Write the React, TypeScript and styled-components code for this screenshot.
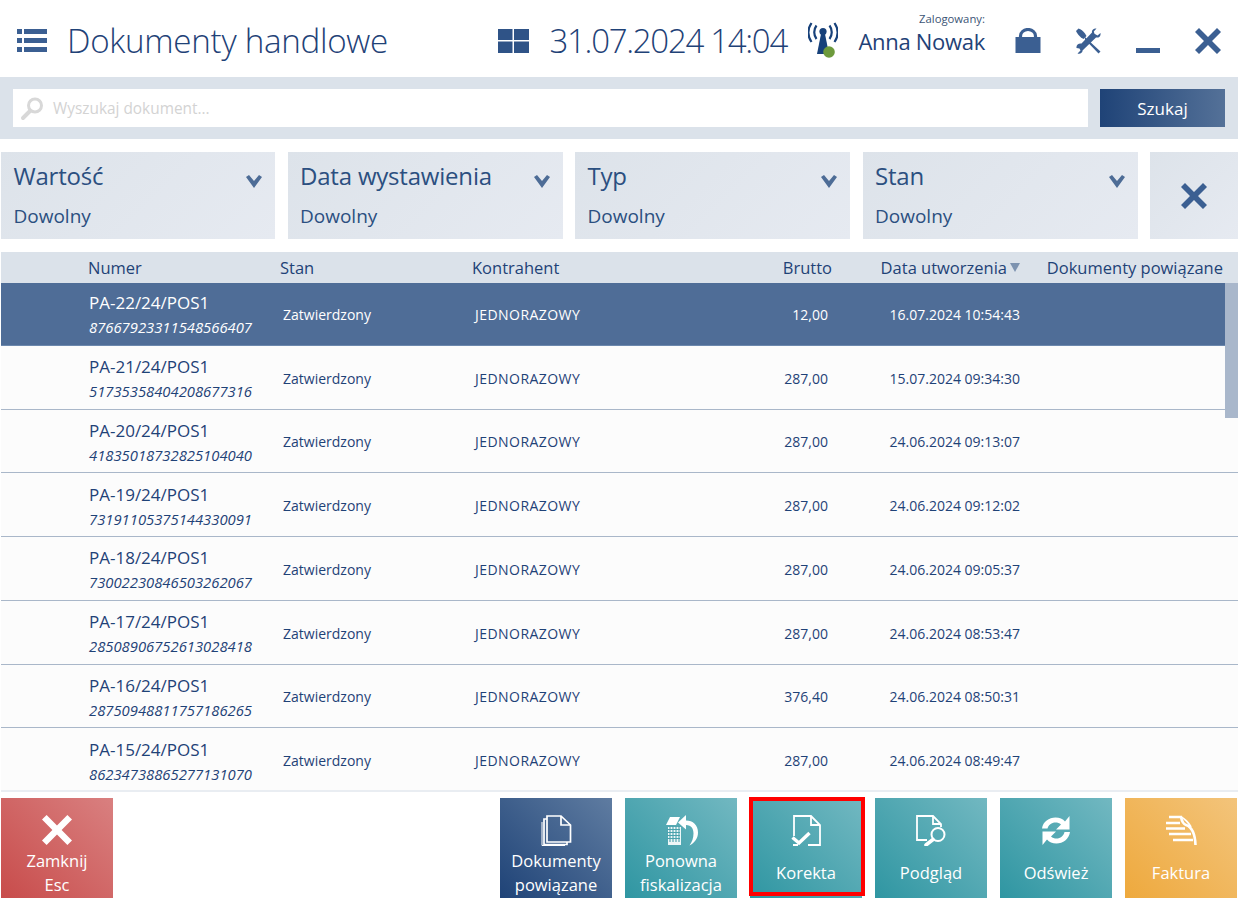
import { FC, ReactNode } from "react";
import styled, { createGlobalStyle } from "styled-components";

const GlobalStyle = createGlobalStyle`
  html, body {
    margin: 0;
    padding: 0;
    background: #fff;
  }
  body {
    font-family: "Open Sans", "Noto Sans", sans-serif;
    color: #1f4277;
  }
  * {
    box-sizing: border-box;
  }
`;

const ROWS = [
  ["PA-22/24/POS1", "87667923311548566407", "12,00", "16.07.2024 10:54:43"],
  ["PA-21/24/POS1", "51735358404208677316", "287,00", "15.07.2024 09:34:30"],
  ["PA-20/24/POS1", "41835018732825104040", "287,00", "24.06.2024 09:13:07"],
  ["PA-19/24/POS1", "73191105375144330091", "287,00", "24.06.2024 09:12:02"],
  ["PA-18/24/POS1", "73002230846503262067", "287,00", "24.06.2024 09:05:37"],
  ["PA-17/24/POS1", "28508906752613028418", "287,00", "24.06.2024 08:53:47"],
  ["PA-16/24/POS1", "28750948811757186265", "376,40", "24.06.2024 08:50:31"],
  ["PA-15/24/POS1", "86234738865277131070", "287,00", "24.06.2024 08:49:47"],
];

const FILTERS = ["Wartość", "Data wystawienia", "Typ", "Stan"];

const CrossIcon: FC<{ size: number; color: string }> = ({ size, color }) => (
  <svg width={size} height={size} viewBox="0 0 26 26">
    <path d="M4 0 13 9 22 0 26 4 17 13 26 22 22 26 13 17 4 26 0 22 9 13 0 4Z" fill={color} />
  </svg>
);

const Chevron = () => (
  <svg width="16" height="14" viewBox="0 0 16 14">
    <path d="M0 2 3 0 8 6 13 0 16 2 8 13Z" fill="#4d6c96" />
  </svg>
);

const MenuIcon = () => (
  <svg width="30" height="24" viewBox="0 0 30 24" fill="#3b5f92">
    <rect x="0" y="0" width="5" height="5" />
    <rect x="7" y="0" width="23" height="5" />
    <rect x="0" y="9" width="5" height="5" />
    <rect x="7" y="9" width="23" height="5" />
    <rect x="0" y="18" width="5" height="5" />
    <rect x="7" y="18" width="23" height="5" />
  </svg>
);

const TilesIcon = () => (
  <svg width="31" height="24" viewBox="0 0 31 24" fill="#2f5387">
    <rect x="0" y="0" width="14.5" height="11" />
    <rect x="16" y="0" width="15" height="11" />
    <rect x="0" y="12.5" width="14.5" height="11.5" />
    <rect x="16" y="12.5" width="15" height="11.5" />
  </svg>
);

const SignalIcon = () => (
  <svg width="30" height="37" viewBox="0 0 30 37" fill="none">
    <path d="M13 12 9 32H21L17 12Z" fill="#17417a" />
    <circle cx="15" cy="9.500" r="3.600" fill="#17417a" />
    <path d="M8.500 3.500C5.500 7.500 5.500 13 8.500 17M21.500 3.500C24.500 7.500 24.500 13 21.500 17" stroke="#17417a" strokeWidth="2.200" />
    <path d="M3.500 1C-0.500 7 -0.500 14 3.500 20M26.500 1C30.500 7 30.500 14 26.500 20" stroke="#17417a" strokeWidth="2.200" />
    <circle cx="21" cy="30" r="5.800" fill="#6d9a3c" />
  </svg>
);

const LockIcon = () => (
  <svg width="26" height="25" viewBox="0 0 26 25" fill="none">
    <path d="M5.500 11V8a7.500 6.500 0 0 1 15 0v3" stroke="#3b5f92" strokeWidth="3.200" />
    <rect x="0.500" y="9" width="25" height="16" fill="#3b5f92" />
  </svg>
);

const ToolsIcon = () => (
  <svg width="26" height="26" viewBox="0 0 26 26" fill="#3b5f92">
    <path d="M0 3 2.500 0.500C5 1 7 3 9 5.500L10.500 8 7.500 11 5 9.500C3 7.500 1 5.500 0 3Z" />
    <path d="M8.500 8.500 10.500 10.500 24.500 23.500 22.500 25.500 9 11.500Z" />
    <path d="M24.500 5C25 8 23 10 20 9.500L6.500 22.500C6.800 24.800 4 26.500 1.500 25.500L4.500 22.500 3.500 20.500 0.500 20C0 17 2.500 15 5.500 15.500L16 4.500C15.500 2 17.800 0 20.500 0.500L17.800 3.500 18.500 5.800 21.500 7.500Z" />
  </svg>
);

const DocsIcon = () => (
  <svg width="31" height="31" viewBox="0 0 31 31" fill="none" stroke="#fff" strokeWidth="1.700">
    <path d="M6 1H20L29.500 10V27H6Z" />
    <path d="M20 1V10H29.500" />
    <path d="M6 4H3V29.500H26V27" />
    <path d="M1 7V30.500H24" strokeWidth="1" />
  </svg>
);

const RefiscalIcon = () => (
  <svg width="33" height="31" viewBox="0 0 33 31" fill="none">
    <path d="M1 10 5 2H15L11 10Z" fill="#fff" />
    <path d="M3 12H16V30H3Z" fill="#fff" opacity="0.9" />
    <path d="M2 14.500H15M2 17.500H15M2 20.500H15M2 23.500H15M5 11V27M8 11V27M11 11V27M14 11V27" stroke="#4aa2ad" strokeWidth="1.100" />
    <path d="M21 0 13 7.500 21 14.500V10C26.500 10 28.500 14 28.500 18.500 28.500 23 27 27 24.500 30.500 29.500 28 33 23.500 33 17.500 33 10 28 5.500 21 5.500Z" fill="#fff" />
  </svg>
);

const CorrectionIcon = () => (
  <svg width="30" height="31" viewBox="0 0 30 31" fill="none" stroke="#fff" strokeWidth="1.800">
    <path d="M3 21V1H20L29 10V30H17M7 30H2" />
    <path d="M20 1V10H29" />
    <path d="M1.500 22.500 8 28 18.500 18" strokeWidth="3.400" />
  </svg>
);

const PreviewIcon = () => (
  <svg width="30" height="31" viewBox="0 0 30 31" fill="none" stroke="#fff" strokeWidth="1.800">
    <path d="M11 25H1V1H17L25 9V12" />
    <path d="M17 1V9H25" />
    <circle cx="22" cy="19.500" r="6.500" strokeWidth="2" />
    <path d="M17 24.500 10 30" strokeWidth="3.600" strokeLinecap="round" />
  </svg>
);

const RefreshIcon = () => (
  <svg width="30" height="31" viewBox="0 0 30 31" fill="#fff">
    <path d="M1 13.500C2 6.500 8 2.500 14.500 2.500 18.500 2.500 22 4 24 6.500L28.500 1V14.500H15L20 9.500C18.500 8 16.500 7.500 14.500 7.500 10.500 7.500 7.500 10 6.500 13.500Z" />
    <path d="M29 17C28 24 22 28.500 15.500 28.500 11.500 28.500 8 27 6 24.500L1.500 30V16.500H15L10 21.500C11.500 23 13.500 23.500 15.500 23.500 19.500 23.500 22.500 21 23.500 17Z" />
  </svg>
);

const InvoiceIcon = () => (
  <svg width="32" height="31" viewBox="0 0 32 31" fill="none" stroke="#fff" strokeWidth="2.600">
    <path d="M4 2H16C17 7 18 9 21 10 27 12 30 18 30.500 30" />
    <path d="M1 8H15M1 13.500H20" />
    <path d="M4 19H26M8 25H28" />
    <path d="M16 2C19 3 24 8 26 12" strokeWidth="1.800" />
  </svg>
);

const Page = styled.div`
  width: 1238px;
  height: 907px;
  display: flex;
  flex-direction: column;
`;

const Header = styled.header`
  height: 77px;
  display: flex;
  align-items: center;
  padding: 4px 17px 0 17px;
`;

const Title = styled.h1`
  flex: 1;
  margin: 0 0 0 20px;
  font-size: 33.200px;
  font-weight: 300;
  color: #1f4277;
  letter-spacing: -0.3px;
`;

const Clock = styled.div`
  margin: 0 21px 0 21px;
  font-size: 33px;
  font-weight: 300;
  letter-spacing: -1.300px;
  color: #1f4277;
`;

const User = styled.div`
  width: 127px;
  margin: -14px 0 0 20px;
  text-align: right;
  display: flex;
  flex-direction: column;
`;

const UserLabel = styled.span`
  font-size: 11.300px;
  line-height: 14px;
  color: #3c5475;
`;

const UserName = styled.span`
  font-size: 22px;
  line-height: 30px;
  letter-spacing: -0.3px;
  color: #1f4277;
`;

const HeaderIcons = styled.div`
  display: flex;
  align-items: center;
  gap: 34.700px;
  margin-left: 30px;
`;

const Minimize = styled.span`
  display: block;
  width: 24px;
  height: 5px;
  margin-top: 20px;
  background: #3b5f92;
`;

const SearchBand = styled.div`
  height: 62px;
  background: #dbe2ea;
  display: flex;
  align-items: center;
  gap: 12px;
  padding: 0 13px;
`;

const SearchBox = styled.div`
  flex: 1;
  height: 38px;
  background: #fff;
  display: flex;
  align-items: center;
  gap: 8px;
  padding-left: 7px;
  font-size: 15.400px;
  color: #d3d3d3;
`;

const SearchButton = styled.button`
  width: 125px;
  height: 38px;
  border: 0;
  background: linear-gradient(90deg, #1f4377, #547198);
  color: #fff;
  font: inherit;
  font-size: 17px;
`;

const Filters = styled.div`
  display: grid;
  grid-template-columns: 274px 275px 275px 275px 88px;
  column-gap: 12.500px;
  padding: 13px 0 13px 1px;
`;

const Filter = styled.div`
  height: 87px;
  padding: 7px 12.500px 10px;
  position: relative;
  background: linear-gradient(135deg, #dde3ea, #e6eaf1);
  display: flex;
  flex-direction: column;
  justify-content: space-between;
`;

const FilterTitle = styled.div`
  font-size: 24px;
  line-height: 34px;
  letter-spacing: -0.2px;
  color: #2b4f80;
`;

const FilterValue = styled.div`
  font-size: 19px;
  line-height: 26px;
  color: #2b4f80;
`;

const ChevronSlot = styled.span`
  position: absolute;
  top: 20px;
  right: 13px;
`;

const ClearFilter = styled(Filter)`
  align-items: center;
  justify-content: center;
  padding: 0;
`;

const columns = "87px 192px 192px 261px 99px 188px 1fr";

const TableHead = styled.div`
  height: 31px;
  background: #dbe2ea;
  display: grid;
  grid-template-columns: ${columns};
  align-items: center;
  margin-left: 1px;
  padding-right: 15px;
  font-size: 16.500px;
  color: #1f4277;
`;

const HeadCell = styled.div<{ $align?: string }>`
  text-align: ${(p) => p.$align ?? "left"};
  white-space: nowrap;
`;

const TableBody = styled.div`
  position: relative;
  height: 509px;
  margin-left: 1px;
  overflow: hidden;
  background: #fcfcfc;
  border-bottom: 2px solid #e9edf2;
`;

const Row = styled.div<{ $selected?: boolean }>`
  height: 63.750px;
  display: grid;
  grid-template-columns: ${columns};
  align-items: center;
  padding: 2px 15px 0 0;
  border-bottom: 1px solid ${(p) => (p.$selected ? "#6c88ad" : "#a9b7c9")};
  background: ${(p) => (p.$selected ? "#4f6d97" : "transparent")};
  color: ${(p) => (p.$selected ? "#fff" : "#1f4277")};
  font-size: 14px;

  &:first-child {
    margin-top: -1px;
  }
`;

const NumberCell = styled.div`
  display: flex;
  flex-direction: column;
  gap: 4px;
  padding-left: 1px;
`;

const DocNumber = styled.span`
  font-size: 17px;
  line-height: 22px;
`;

const Fiscal = styled.span`
  font-size: 14.800px;
  line-height: 18px;
  font-style: italic;
`;

const Cell = styled.div`
  padding-left: 3px;
`;

const ClientCell = styled(Cell)`
  letter-spacing: 0.450px;
`;

const AmountCell = styled.div`
  text-align: right;
  padding-right: 4px;
`;

const DateCell = styled.div`
  text-align: right;
  white-space: nowrap;
`;

const Scrollbar = styled.div`
  position: absolute;
  top: 0;
  right: 0;
  width: 13px;
  height: 135px;
  background: #a9b7cb;
`;

const SortArrow = styled.span`
  display: inline-block;
  margin-left: 3px;
  width: 0;
  height: 0;
  border-left: 5px solid transparent;
  border-right: 5px solid transparent;
  border-top: 9px solid #7d93b0;
  vertical-align: 2px;
`;

const Toolbar = styled.div`
  display: flex;
  gap: 13px;
  padding: 6px 1px 0 1px;
`;

const variants: Record<string, string> = {
  red: "linear-gradient(45deg, #c84c4b, #d98080)",
  navy: "linear-gradient(45deg, #1f4377, #5f7ca1)",
  teal: "linear-gradient(45deg, #2f96a2, #72b8c1)",
  orange: "linear-gradient(45deg, #eea93d, #f3c47b)",
};

const ActionButton = styled.button<{ $variant: string; $outlined?: boolean; $pushRight?: boolean }>`
  width: 112px;
  height: 100px;
  flex: none;
  border: 0;
  padding: 16px 0 0;
  margin-right: ${(p) => (p.$pushRight ? "auto" : "0")};
  background: ${(p) => variants[p.$variant]};
  color: #fff;
  font: inherit;
  position: relative;
  display: flex;
  flex-direction: column;
  align-items: center;

  &::after {
    content: "";
    display: ${(p) => (p.$outlined ? "block" : "none")};
    position: absolute;
    top: -1px;
    left: -1px;
    right: -3px;
    bottom: 2px;
    border: 4px solid #f00;
  }
`;

const ActionIcon = styled.span`
  height: 32px;
  display: flex;
  align-items: center;
`;

const ActionLabel = styled.span<{ $single?: boolean }>`
  margin-top: ${(p) => (p.$single ? "15px" : "3px")};
  font-size: 16.500px;
  line-height: 24px;
  white-space: pre-line;
`;

const Action: FC<{
  variant: string;
  icon: ReactNode;
  label: string;
  outlined?: boolean;
  pushRight?: boolean;
}> = ({ variant, icon, label, outlined, pushRight }) => (
  <ActionButton $variant={variant} $outlined={outlined} $pushRight={pushRight}>
    <ActionIcon>{icon}</ActionIcon>
    <ActionLabel $single={!label.includes("\n")}>{label}</ActionLabel>
  </ActionButton>
);

const App: FC = () => {
  return (
    <Page>
      <GlobalStyle />
      <Header>
        <MenuIcon />
        <Title>Dokumenty handlowe</Title>
        <TilesIcon />
        <Clock>31.07.2024 14:04</Clock>
        <SignalIcon />
        <User>
          <UserLabel>Zalogowany:</UserLabel>
          <UserName>Anna Nowak</UserName>
        </User>
        <HeaderIcons>
          <LockIcon />
          <ToolsIcon />
          <Minimize />
          <CrossIcon size={26} color="#3b5f92" />
        </HeaderIcons>
      </Header>

      <SearchBand>
        <SearchBox>
          <svg width="25" height="25" viewBox="0 0 25 25" fill="none">
            <circle cx="15" cy="9.500" r="6.500" stroke="#d8d8d8" strokeWidth="3" />
            <path d="M10 15 3 22" stroke="#d8d8d8" strokeWidth="4" strokeLinecap="round" />
          </svg>
          Wyszukaj dokument...
        </SearchBox>
        <SearchButton>Szukaj</SearchButton>
      </SearchBand>

      <Filters>
        {FILTERS.map((f) => (
          <Filter key={f}>
            <FilterTitle>{f}</FilterTitle>
            <FilterValue>Dowolny</FilterValue>
            <ChevronSlot>
              <Chevron />
            </ChevronSlot>
          </Filter>
        ))}
        <ClearFilter>
          <CrossIcon size={26} color="#3b5f92" />
        </ClearFilter>
      </Filters>

      <TableHead>
        <span />
        <HeadCell>Numer</HeadCell>
        <HeadCell>Stan</HeadCell>
        <HeadCell>Kontrahent</HeadCell>
        <HeadCell $align="right">Brutto</HeadCell>
        <HeadCell $align="right">
          Data utworzenia
          <SortArrow />
        </HeadCell>
        <HeadCell $align="right">Dokumenty powiązane</HeadCell>
      </TableHead>
      <TableBody>
        {ROWS.map(([num, fiscal, amount, date], i) => (
          <Row key={num} $selected={i === 0}>
            <span />
            <NumberCell>
              <DocNumber>{num}</DocNumber>
              <Fiscal>{fiscal}</Fiscal>
            </NumberCell>
            <Cell>Zatwierdzony</Cell>
            <ClientCell>JEDNORAZOWY</ClientCell>
            <AmountCell>{amount}</AmountCell>
            <DateCell>{date}</DateCell>
            <span />
          </Row>
        ))}
        <Scrollbar />
      </TableBody>

      <Toolbar>
        <Action variant="red" icon={<CrossIcon size={30} color="#fff" />} label={"Zamknij\nEsc"} pushRight />
        <Action variant="navy" icon={<DocsIcon />} label={"Dokumenty\npowiązane"} />
        <Action variant="teal" icon={<RefiscalIcon />} label={"Ponowna\nfiskalizacja"} />
        <Action variant="teal" icon={<CorrectionIcon />} label="Korekta" outlined />
        <Action variant="teal" icon={<PreviewIcon />} label="Podgląd" />
        <Action variant="teal" icon={<RefreshIcon />} label="Odśwież" />
        <Action variant="orange" icon={<InvoiceIcon />} label="Faktura" />
      </Toolbar>
    </Page>
  );
};

export default App;
